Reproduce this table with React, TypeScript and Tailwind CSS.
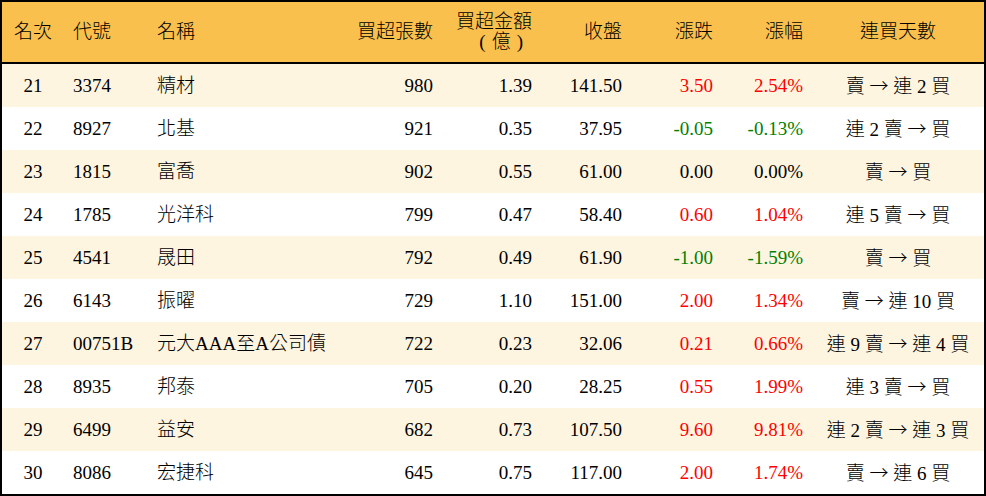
import React from 'react';

type Row = {
  rank: number;
  code: string;
  name: string;
  lots: number;
  amount: string;
  close: string;
  change: string;
  pct: string;
  streak: string;
};

const rows: Row[] = [
  { rank: 21, code: '3374', name: '精材', lots: 980, amount: '1.39', close: '141.50', change: '3.50', pct: '2.54%', streak: '賣 → 連 2 買' },
  { rank: 22, code: '8927', name: '北基', lots: 921, amount: '0.35', close: '37.95', change: '-0.05', pct: '-0.13%', streak: '連 2 賣 → 買' },
  { rank: 23, code: '1815', name: '富喬', lots: 902, amount: '0.55', close: '61.00', change: '0.00', pct: '0.00%', streak: '賣 → 買' },
  { rank: 24, code: '1785', name: '光洋科', lots: 799, amount: '0.47', close: '58.40', change: '0.60', pct: '1.04%', streak: '連 5 賣 → 買' },
  { rank: 25, code: '4541', name: '晟田', lots: 792, amount: '0.49', close: '61.90', change: '-1.00', pct: '-1.59%', streak: '賣 → 買' },
  { rank: 26, code: '6143', name: '振曜', lots: 729, amount: '1.10', close: '151.00', change: '2.00', pct: '1.34%', streak: '賣 → 連 10 買' },
  { rank: 27, code: '00751B', name: '元大AAA至A公司債', lots: 722, amount: '0.23', close: '32.06', change: '0.21', pct: '0.66%', streak: '連 9 賣 → 連 4 買' },
  { rank: 28, code: '8935', name: '邦泰', lots: 705, amount: '0.20', close: '28.25', change: '0.55', pct: '1.99%', streak: '連 3 賣 → 買' },
  { rank: 29, code: '6499', name: '益安', lots: 682, amount: '0.73', close: '107.50', change: '9.60', pct: '9.81%', streak: '連 2 賣 → 連 3 買' },
  { rank: 30, code: '8086', name: '宏捷科', lots: 645, amount: '0.75', close: '117.00', change: '2.00', pct: '1.74%', streak: '賣 → 連 6 買' },
];

const grid = 'grid grid-cols-[62px_84px_192px_102px_99px_90px_91px_90px_1fr] items-center';

function tone(v: string) {
  if (v.startsWith('-')) return 'text-[#008000]';
  if (/^0\.00/.test(v)) return 'text-black';
  return 'text-[#ff0000]';
}

// the arrow is a full-width glyph in the original, so it gets the CJK font
function Streak({ text }: { text: string }) {
  const [from, to] = text.split(' → ');
  return (
    <div className="text-center whitespace-pre">
      {from} <span className="font-['Noto_Sans_CJK_JP']">→</span> {to}
    </div>
  );
}

export default function App() {
  return (
    <div
      className="w-[986px] h-[496px] border-2 border-black bg-white text-black text-[19px] leading-[20px] font-light"
      style={{ fontFamily: '"Liberation Serif", "Noto Sans CJK TC", serif' }}
    >
      <div className={`${grid} h-[62px] bg-[#f9c04e] border-b-2 border-black`}>
        <div className="text-center">名次</div>
        <div className="pl-[9px]">代號</div>
        <div className="pl-[9px]">名稱</div>
        <div className="pr-[9px] text-right">買超張數</div>
        <div className="pr-[9px] text-right">
          <div>買超金額</div>
          <div className="pr-[9px]">
            (<span className="mx-[6px]">億</span>)
          </div>
        </div>
        <div className="pr-[9px] text-right">收盤</div>
        <div className="pr-[9px] text-right">漲跌</div>
        <div className="pr-[9px] text-right">漲幅</div>
        <div className="text-center">連買天數</div>
      </div>

      {rows.map((r, i) => (
        <div key={r.rank} className={`${grid} h-[43px] ${i % 2 === 0 ? 'bg-[#fef5e1]' : 'bg-white'}`}>
          <div className="text-center">{r.rank}</div>
          <div className="pl-[9px]">{r.code}</div>
          <div className="pl-[9px] whitespace-nowrap">{r.name}</div>
          <div className="pr-[9px] text-right">{r.lots}</div>
          <div className="pr-[9px] text-right">{r.amount}</div>
          <div className="pr-[9px] text-right">{r.close}</div>
          <div className={`pr-[9px] text-right ${tone(r.change)}`}>{r.change}</div>
          <div className={`pr-[9px] text-right ${tone(r.pct)}`}>{r.pct}</div>
          <Streak text={r.streak} />
        </div>
      ))}
    </div>
  );
}
